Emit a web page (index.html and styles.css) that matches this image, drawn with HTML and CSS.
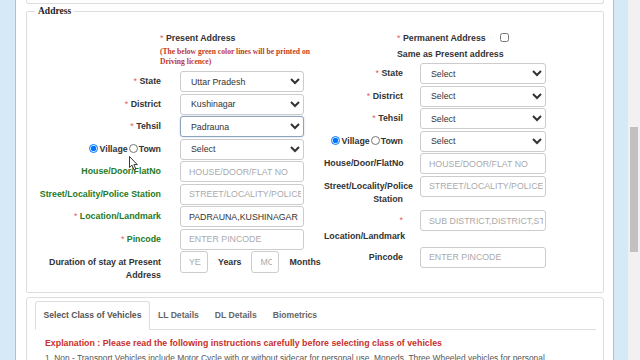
FILE: index.html
```html
<!DOCTYPE html>
<html>
<head>
<meta charset="utf-8">
<link rel="stylesheet" href="styles.css">
</head>
<body>
<div class="page">
  <div class="side-left"></div>
  <main class="content">
    <div class="prev-panel"></div>
    <div class="fieldset">
      <span class="legend">Address</span>
      <div class="cols">
        <div class="col col-left">
          <div class="head head-left">
            <div class="title"><span class="req">*</span> Present Address</div>
            <div class="note">(The below green color lines will be printed on<br>Driving licence)</div>
          </div>
          <div class="row"><label class="lbl"><span class="req">*</span> State</label><select class="ctl"><option>Uttar Pradesh</option></select></div>
          <div class="row"><label class="lbl"><span class="req">*</span> District</label><select class="ctl"><option>Kushinagar</option></select></div>
          <div class="row"><label class="lbl"><span class="req">*</span> Tehsil</label><select class="ctl focus"><option>Padrauna</option></select></div>
          <div class="row"><label class="lbl radios"><input type="radio" name="vt1" checked>Village<input type="radio" name="vt1">Town</label><select class="ctl"><option>Select</option></select></div>
          <div class="row"><label class="lbl green">House/Door/FlatNo</label><input class="ctl" placeholder="HOUSE/DOOR/FLAT NO"></div>
          <div class="row"><label class="lbl green">Street/Locality/Police Station</label><input class="ctl" placeholder="STREET/LOCALITY/POLICE STATION"></div>
          <div class="row"><label class="lbl green"><span class="req">*</span> Location/Landmark</label><input class="ctl" value="PADRAUNA,KUSHINAGAR"></div>
          <div class="row"><label class="lbl green"><span class="req">*</span> Pincode</label><input class="ctl" placeholder="ENTER PINCODE"></div>
          <div class="row"><label class="lbl dur">Duration of stay at Present Address</label>
            <div class="duration">
              <input class="ctl small" placeholder="YEARS"><span class="unit">Years</span>
              <input class="ctl small" placeholder="MONTHS"><span class="unit">Months</span>
            </div>
          </div>
        </div>
        <div class="col col-right">
          <div class="head head-right">
            <div class="title"><span class="req">*</span> Permanent Address <input type="checkbox" class="same"></div>
            <div class="same-text">Same as Present address</div>
          </div>
          <div class="row row-r"><label class="lbl"><span class="req">*</span> State</label><select class="ctl"><option>Select</option></select></div>
          <div class="row row-r"><label class="lbl"><span class="req">*</span> District</label><select class="ctl"><option>Select</option></select></div>
          <div class="row row-r"><label class="lbl"><span class="req">*</span> Tehsil</label><select class="ctl"><option>Select</option></select></div>
          <div class="row row-r"><label class="lbl radios"><input type="radio" name="vt2" checked>Village<input type="radio" name="vt2">Town</label><select class="ctl"><option>Select</option></select></div>
          <div class="row row-r"><label class="lbl">House/Door/FlatNo</label><input class="ctl" placeholder="HOUSE/DOOR/FLAT NO"></div>
          <div class="row row-r"><label class="lbl nowrap">Street/Locality/Police<br>Station</label><input class="ctl" placeholder="STREET/LOCALITY/POLICE STATION"></div>
          <div class="row row-r row-loc"><label class="lbl nowrap loc"><span class="req">*</span><br>Location/Landmark</label><input class="ctl" placeholder="SUB DISTRICT,DISTRICT,STATE"></div>
          <div class="row row-r row-pin"><label class="lbl">Pincode</label><input class="ctl" placeholder="ENTER PINCODE"></div>
        </div>
      </div>
    </div>
    <div class="tabpanel">
      <nav class="tabs">
        <span class="tab active">Select Class of Vehicles</span>
        <span class="tab">LL Details</span>
        <span class="tab">DL Details</span>
        <span class="tab">Biometrics</span>
      </nav>
      <div class="tab-body">
        <p class="explain">Explanation : Please read the following instructions carefully before selecting class of vehicles</p>
        <p class="point">1. Non - Transport Vehicles include Motor Cycle with or without sidecar for personal use, Moneds, Three Wheeled vehicles for personal</p>
      </div>
    </div>
  </main>
  <div class="side-right"></div>
  <div class="scrollbar"><div class="thumb"></div></div>
  <svg class="cursor" width="10" height="15" viewBox="0 0 10 15"><path d="M0.5 0.5 L0.5 11.5 L3 9.2 L5 13.8 L6.8 13 L4.9 8.6 L8.3 8.6 Z" fill="#fff" stroke="#222" stroke-width="0.9" stroke-linejoin="round"/></svg>
</div>
</body>
</html>
```
FILE: styles.css
```css
body {
  margin: 0;
  font-family: "Liberation Sans", Arial, sans-serif;
  font-size: 8.8px;
  color: #333;
}
.page {
  position: relative;
  display: flex;
  width: 640px;
  height: 360px;
  overflow: hidden;
  background: #d5e9f7;
}
.side-left { width: 15px; flex: none; }
.content {
  flex: none;
  width: 578px;
  height: 360px;
  overflow: hidden;
  background: #fff;
  border-left: 1px solid #9dc6e3;
  border-right: 1px solid #9dc6e3;
  padding: 0 9px 0 10px;
}
.side-right { width: 14px; flex: none; }
.scrollbar { width: 12px; flex: none; background: #f1f1f1; }
.thumb {
  margin-top: 127px;
  margin-left: 2px;
  width: 8px;
  height: 125px;
  background: #c1c1c1;
}
.cursor { position: absolute; left: 129px; top: 156px; }

.prev-panel {
  height: 3px;
  border: 1px solid #ddd;
  border-top: none;
  border-radius: 0 0 3px 3px;
}
.fieldset {
  position: relative;
  margin-top: 7px;
  border: 1px solid #ddd;
  border-radius: 2px;
}
.legend {
  position: absolute;
  top: -7px;
  left: 8px;
  padding: 0 3px;
  background: #fff;
  font-family: "Liberation Serif", "Times New Roman", serif;
  font-weight: bold;
  font-size: 9.5px;
  line-height: 12px;
  color: #222;
}
.cols { display: flex; padding: 20px 0 9px; }
.col-left { width: 297px; flex: none; }
.col-right { width: 279px; flex: none; }

.head { line-height: 13px; font-weight: bold; }
.head-left { padding-left: 133px; margin-bottom: 4px; }
.head-right { padding-left: 73px; margin-bottom: 2.5px; }
.note {
  margin-top: 2px;
  font-family: "Liberation Serif", "Times New Roman", serif;
  font-size: 7.6px;
  line-height: 10px;
  color: #c0392b;
  white-space: nowrap;
}
.same { width: 9px; height: 9px; margin: 0 0 0 12px; vertical-align: -1px; }
.same-text { margin-top: 2.5px; }
.req { color: #e0605c; font-weight: normal; }

.row {
  display: grid;
  grid-template-columns: 134px 124px;
  column-gap: 19px;
  align-items: start;
  margin-bottom: 1.5px;
}
.row-r { grid-template-columns: 79px 126px; column-gap: 17px; }
.row-loc { margin-top: 4.5px; }
.row-pin { margin-top: 2.5px; }
.lbl {
  text-align: right;
  padding-top: 4px;
  line-height: 13px;
  font-weight: bold;
  color: #333;
}
.lbl.dur { padding-top: 5px; line-height: 12.5px; }
.lbl.green { color: #257a25; }
.lbl.nowrap { white-space: nowrap; }
.lbl.loc { padding-top: 2px; line-height: 16px; }
.radios input { width: 9px; height: 9px; margin: 0 1px 0 0; vertical-align: -1px; }
.radios input:last-of-type { margin-left: 1px; }
.ctl {
  box-sizing: border-box;
  width: 100%;
  height: 21px;
  border: 1px solid #ccc;
  border-radius: 3px;
  padding: 0 2px 0 8px;
  font-family: "Liberation Sans", Arial, sans-serif;
  font-size: 8.8px;
  color: #333;
  background: #fff;
  outline: none;
}
select.ctl { padding-left: 6px; }
.ctl::placeholder { color: #aaa; }
.ctl.focus { border-color: #8ea3bd; box-shadow: 0 0 2px rgba(110, 140, 180, 0.45); }
.duration { display: flex; align-items: center; white-space: nowrap; }
.ctl.small { width: 28px; height: 22px; flex: none; padding-right: 6px; }
.unit { font-weight: bold; margin: 0 10px; }

.tabpanel {
  margin-top: 4px;
  height: 120px;
  border: 1px solid #ddd;
  border-radius: 3px;
  padding: 3px 7px 0 8px;
}
.tabs {
  display: flex;
  border-bottom: 1px solid #ddd;
  height: 28px;
}
.tab {
  box-sizing: border-box;
  height: 28px;
  line-height: 26px;
  padding: 0 7px;
  border: 1px solid transparent;
  font-weight: bold;
  font-size: 8.6px;
  color: #666;
}
.tab.active {
  height: 29px;
  padding: 0 7.5px;
  border-color: #ddd;
  border-bottom-color: #fff;
  border-radius: 3px 3px 0 0;
  background: #fff;
  color: #555;
}
.tab-body { padding: 6px 10px 0; }
.explain {
  margin: 0;
  line-height: 14px;
  font-weight: bold;
  color: #c9302c;
}
.point {
  margin: 1px 0 0;
  line-height: 14px;
  font-size: 8.4px;
  white-space: nowrap;
  color: #555;
}
```
